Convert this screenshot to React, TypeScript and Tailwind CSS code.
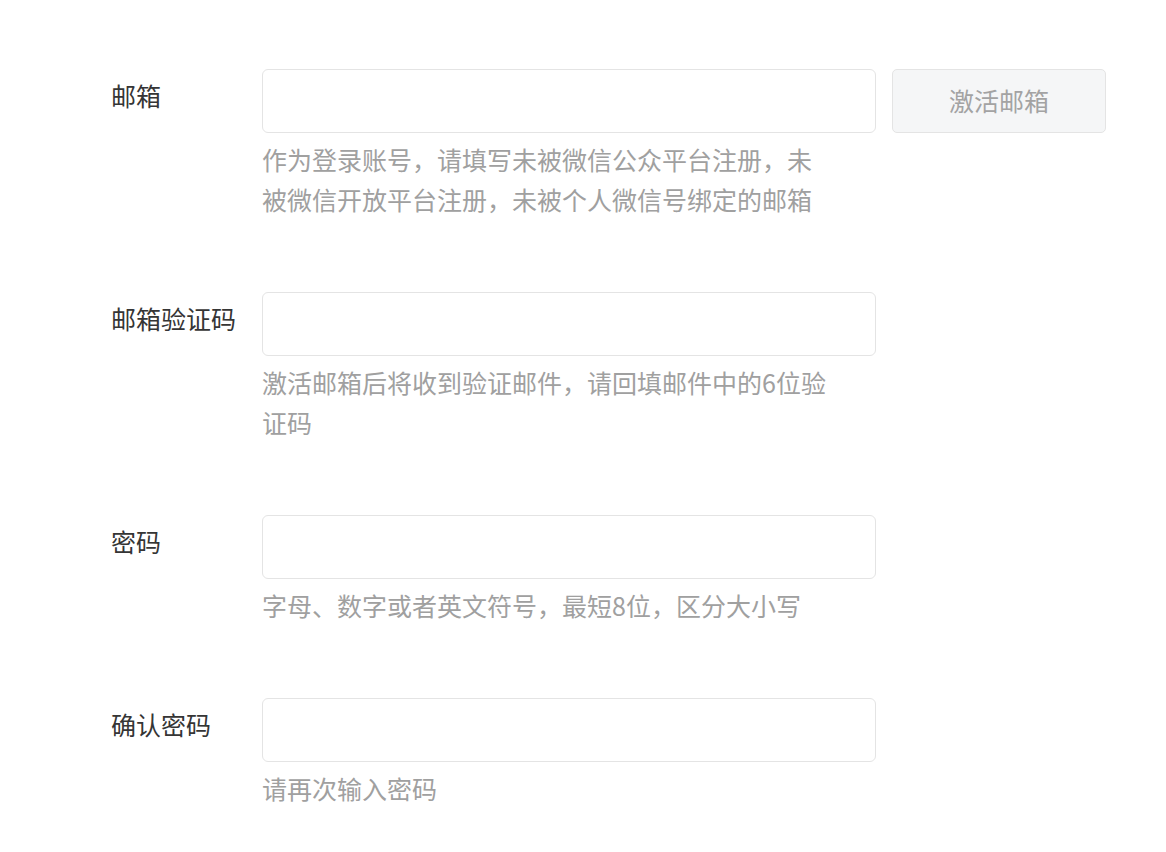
const FONT = {
  fontFamily: '"Noto Sans CJK SC", "Noto Sans", sans-serif',
};

type Field = {
  label: string;
  hint: string;
  action?: string;
};

const FIELDS: Field[] = [
  {
    label: "邮箱",
    hint: "作为登录账号，请填写未被微信公众平台注册，未被微信开放平台注册，未被个人微信号绑定的邮箱",
    action: "激活邮箱",
  },
  {
    label: "邮箱验证码",
    hint: "激活邮箱后将收到验证邮件，请回填邮件中的6位验证码",
  },
  {
    label: "密码",
    hint: "字母、数字或者英文符号，最短8位，区分大小写",
  },
  {
    label: "确认密码",
    hint: "请再次输入密码",
  },
];

export default function App() {
  return (
    <main
      className="min-h-[852px] w-full bg-white pl-[111px] pt-[69px] font-['Noto_Sans_CJK_SC',sans-serif]"
      style={FONT}
    >
      {FIELDS.map((f) => (
        <div key={f.label} className="mb-[73px] flex">
          <label className="mt-[6px] w-[151px] shrink-0 text-[25px] leading-[40px] text-[#353535]">
            {f.label}
          </label>
          <div className="flex flex-col">
            <div className="flex gap-[16px]">
              <input
                type="text"
                className="h-[64px] w-[614px] rounded-[6px] border border-[#e4e4e4] bg-white px-4 text-[25px] outline-none"
              />
              {f.action && (
                <button className="h-[64px] w-[214px] rounded-[5px] border border-[#e4e4e4] bg-[#f5f6f7] text-[25px] text-[#a3a3a3]">
                  {f.action}
                </button>
              )}
            </div>
            <p className="mt-[6px] w-[572px] text-[25px] leading-[40px] text-[#a0a0a0]">
              {f.hint}
            </p>
          </div>
        </div>
      ))}
    </main>
  );
}
